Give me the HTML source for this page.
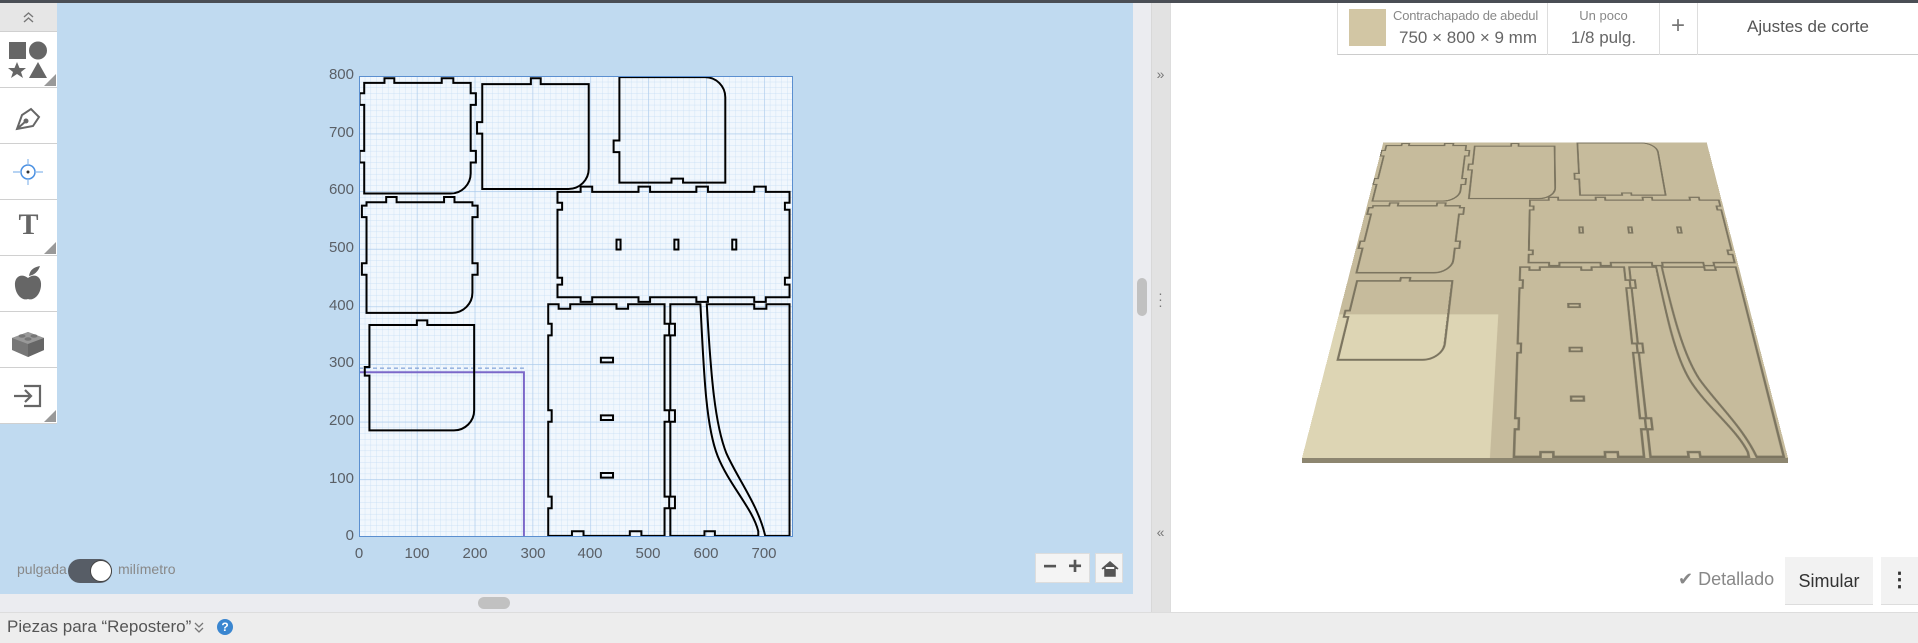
<!DOCTYPE html>
<html><head><meta charset="utf-8"><style>
*{margin:0;padding:0;box-sizing:border-box}
body{width:1918px;height:643px;overflow:hidden;background:#fff;font-family:"Liberation Sans",sans-serif;position:relative}
.abs{position:absolute}
#topline{left:0;top:0;width:1918px;height:3px;background:#4a4e55}
#blue{left:0;top:3px;width:1133px;height:591px;background:#c0daf0}
#tb{left:0;top:3px;width:57px;height:420px;background:#fff;border-right:1px solid #c8c8c8}
.cell{position:absolute;left:0;width:57px;height:56px;border-bottom:1px solid #d0d0d0;background:#fff}
.tri{position:absolute;right:1px;bottom:1px;width:0;height:0;border-left:12px solid transparent;border-bottom:12px solid #999}
.ylab{position:absolute;width:36px;text-align:right;font-size:15px;color:#5a5f66}
.xlab{position:absolute;width:40px;text-align:center;font-size:15px;color:#5a5f66}
</style></head><body>
<div class="abs" id="blue"></div>
<div class="abs" id="topline"></div>
<!-- toolbar -->
<div class="abs" id="tb">
 <div class="cell" style="top:0;height:29px;background:#e6e6e6"><svg width="57" height="29"><path d="M24 14 L28.5 10 L33 14 M24 19 L28.5 15 L33 19" fill="none" stroke="#777" stroke-width="1.4"/></svg></div>
 <div class="cell" style="top:29px">
  <svg width="57" height="56"><rect x="9" y="10" width="17" height="17" fill="#666"/><circle cx="38" cy="18.5" r="9" fill="#666"/><polygon points="17,30 19.5,36 26,36 21,40 23,46 17,42 11,46 13,40 8,36 14.5,36" fill="#666"/><polygon points="38,30 47,46 29,46" fill="#666"/></svg><div class="tri"></div></div>
 <div class="cell" style="top:85px">
  <svg width="57" height="56"><path d="M17 41 L22 27 L31 21 L39 29 L33 38 Z M17 41 L26 33" fill="none" stroke="#666" stroke-width="2"/><circle cx="26" cy="33" r="2.5" fill="#666"/></svg></div>
 <div class="cell" style="top:141px">
  <svg width="57" height="56"><circle cx="28" cy="28" r="7" fill="none" stroke="#4a90e2" stroke-width="1.5"/><circle cx="28" cy="28" r="1.5" fill="#333"/><path d="M28 15V21M28 35V41M13 28H21M35 28H43" stroke="#8bb9ec" stroke-width="1.2"/></svg></div>
 <div class="cell" style="top:197px">
  <div style="position:absolute;left:0;top:8px;width:57px;text-align:center;font-family:'Liberation Serif',serif;font-weight:bold;font-size:30px;color:#666">T</div><div class="tri"></div></div>
 <div class="cell" style="top:253px">
  <svg width="57" height="56"><path d="M28 22 C22 17 14 20 15 30 C16 40 23 45 28 43 C33 45 40 40 41 30 C42 20 34 17 28 22Z" fill="#666"/><path d="M29 20 C30 13 35 11 40 10 C38 16 34 19 29 20Z" fill="#666"/></svg></div>
 <div class="cell" style="top:309px">
  <svg width="57" height="56"><polygon points="12,26 28,20 44,26 44,38 28,45 12,38" fill="#777"/><polygon points="12,26 28,32 44,26 28,20" fill="#999"/><polygon points="28,32 44,26 44,38 28,45" fill="#666"/><ellipse cx="22" cy="24" rx="3.5" ry="1.8" fill="#777"/><ellipse cx="34" cy="24" rx="3.5" ry="1.8" fill="#777"/><ellipse cx="28" cy="27" rx="3.5" ry="1.8" fill="#777"/></svg></div>
 <div class="cell" style="top:365px">
  <svg width="57" height="56"><path d="M24 18 H40 V38 H24" fill="none" stroke="#666" stroke-width="2.2"/><path d="M14 28 H31 M25 22 L31 28 L25 34" fill="none" stroke="#666" stroke-width="2.2"/></svg><div class="tri"></div></div>
</div>
<!-- canvas -->
<svg class="abs" style="left:359px;top:76px" width="434" height="461" viewBox="0 0 750 800" preserveAspectRatio="none">
 <defs>
  <pattern id="mi" width="10" height="10" patternUnits="userSpaceOnUse"><path d="M0 0H10M0 0V10" stroke="#c4dcf3" stroke-width="1.2" fill="none"/></pattern>
  <pattern id="ma" width="100" height="100" patternUnits="userSpaceOnUse" y="0"><path d="M0 0H100M0 0V100" stroke="#a8c8ea" stroke-width="2" fill="none"/></pattern>
 </defs>
 <rect width="750" height="800" fill="#f1f7fd"/>
 <rect width="750" height="800" fill="url(#mi)"/>
 <rect width="750" height="800" fill="url(#ma)"/>
 <path d="M0 514 H285 V800" fill="none" stroke="#7b68c9" stroke-width="2" vector-effect="non-scaling-stroke"/>
 <path d="M0 507 H285" fill="none" stroke="#6a8fd0" stroke-width="1" stroke-dasharray="4 3" vector-effect="non-scaling-stroke"/>
 <g fill="none" stroke="#000" stroke-width="2" vector-effect="non-scaling-stroke">
  <path vector-effect="non-scaling-stroke" d="M9,204 H158 A35,35 0 0 0 193,169 V150 H202 V130 H193 V50 H202 V30 H193 V12 H163 V4 H143 V12 H61 V4 H44 V12 H9 V30 H1 V50 H9 V130 H1 V150 H9 Z"/>
  <path vector-effect="non-scaling-stroke" d="M213,196 H362 A35,35 0 0 0 397,161 V14 H314 V4 H297 V14 H213 V80 H204 V100 H213 Z"/>
  <path vector-effect="non-scaling-stroke" d="M450,2 H598 A35,35 0 0 1 633,37 V185 H560 V178 H540 V185 H450 V132 H440 V112 H450 Z"/>
  <path vector-effect="non-scaling-stroke" d="M343,201 H383 V192 H403 V201 H483 V192 H503 V201 H583 V192 H603 V201 H683 V192 H703 V201 H744 V220 H736 V232 H744 V350 H736 V362 H744 V384 H703 V392 H683 V384 H603 V392 H583 V384 H503 V392 H483 V384 H403 V392 H383 V384 H343 V362 H351 V350 H343 V232 H351 V220 H343 Z"/>
  <rect vector-effect="non-scaling-stroke" x="445" y="284" width="7" height="17"/><rect vector-effect="non-scaling-stroke" x="545" y="284" width="7" height="17"/><rect vector-effect="non-scaling-stroke" x="645" y="284" width="7" height="17"/>
  <path vector-effect="non-scaling-stroke" d="M13,411 H161 A35,35 0 0 0 196,376 V345 H205 V325 H196 V245 H205 V225 H196 V219 H165 V210 H147 V219 H65 V210 H47 V219 H13 V225 H5 V245 H13 V325 H5 V345 H13 Z"/>
  <path vector-effect="non-scaling-stroke" d="M18,615 H164 A35,35 0 0 0 199,580 V432 H118 V424 H100 V432 H18 V505 H10 V520 H18 Z"/>
  <path vector-effect="non-scaling-stroke" d="M327,396 H345 V404 H365 V396 H445 V404 H465 V396 H528 V430 H536 V450 H528 V580 H536 V600 H528 V730 H536 V750 H528 V798 H488 V790 H468 V798 H388 V790 H368 V798 H327 V750 H333 V730 H327 V600 H333 V580 H327 V450 H333 V430 H327 Z"/>
  <rect vector-effect="non-scaling-stroke" x="418" y="489" width="21" height="8"/><rect vector-effect="non-scaling-stroke" x="418" y="589" width="21" height="8"/><rect vector-effect="non-scaling-stroke" x="418" y="689" width="21" height="8"/>
  <path vector-effect="non-scaling-stroke" d="M538,396 H590 C596,520 600,610 620,660 C640,710 680,750 690,790 V798 H615 V790 H597 V798 H538 V750 H546 V730 H538 V600 H546 V580 H538 V450 H546 V430 H538 Z"/>
  <path vector-effect="non-scaling-stroke" d="M601,396 H683 V404 H704 V396 H744 V798 H702 C690,745 655,700 635,655 C615,605 608,520 601,396 Z"/>
 </g>
 <rect x="0" y="0" width="750" height="800" fill="none" stroke="#5b8fd0" stroke-width="2" vector-effect="non-scaling-stroke"/>
</svg>
<div class="ylab" style="left:318px;top:66px">800</div>
<div class="ylab" style="left:318px;top:124px">700</div>
<div class="ylab" style="left:318px;top:181px">600</div>
<div class="ylab" style="left:318px;top:239px">500</div>
<div class="ylab" style="left:318px;top:297px">400</div>
<div class="ylab" style="left:318px;top:354px">300</div>
<div class="ylab" style="left:318px;top:412px">200</div>
<div class="ylab" style="left:318px;top:470px">100</div>
<div class="ylab" style="left:318px;top:527px">0</div>
<div class="xlab" style="left:339px;top:545px">0</div>
<div class="xlab" style="left:397px;top:545px">100</div>
<div class="xlab" style="left:455px;top:545px">200</div>
<div class="xlab" style="left:513px;top:545px">300</div>
<div class="xlab" style="left:570px;top:545px">400</div>
<div class="xlab" style="left:628px;top:545px">500</div>
<div class="xlab" style="left:686px;top:545px">600</div>
<div class="xlab" style="left:744px;top:545px">700</div>
<!-- toggle -->
<div class="abs" style="left:17px;top:561px;font-size:14px;color:#888">pulgada</div>
<div class="abs" style="left:68px;top:559px;width:44px;height:24px;border-radius:12px;background:#575d66"></div>
<div class="abs" style="left:90px;top:560px;width:22px;height:22px;border-radius:11px;background:#fff;border:1px solid #444"></div>
<div class="abs" style="left:118px;top:561px;font-size:14px;color:#888">milímetro</div>
<!-- zoom controls -->
<div class="abs" style="left:1035px;top:553px;width:55px;height:30px;background:#f4f4f4;border:1px solid #ddd;font-size:24px;color:#555;line-height:26px;font-weight:bold"><span style="position:absolute;left:7px">−</span><span style="position:absolute;left:32px">+</span></div>
<div class="abs" style="left:1095px;top:553px;width:28px;height:30px;background:#f4f4f4;border:1px solid #ddd"><svg width="28" height="30"><path d="M6 15 L14 8 L22 15 M9 13 V22 H19 V13" fill="#555" stroke="#555" stroke-width="1.5"/></svg></div>
<!-- bottom scroll strip -->
<div class="abs" style="left:0;top:594px;width:1133px;height:18px;background:#ebecf0"></div>
<div class="abs" style="left:478px;top:597px;width:32px;height:12px;border-radius:6px;background:#c1c1c1"></div>
<!-- middle strip -->
<div class="abs" style="left:1133px;top:3px;width:18px;height:609px;background:#ebecf0"></div>
<div class="abs" style="left:1137px;top:278px;width:10px;height:38px;border-radius:5px;background:#c1c1c1"></div>
<div class="abs" style="left:1151px;top:3px;width:19px;height:609px;background:#e2e2e2;border-left:1px solid #d8d8d8"></div>
<div class="abs" style="left:1151px;top:66px;width:19px;text-align:center;font-size:14px;color:#777">»</div>
<div class="abs" style="left:1151px;top:290px;width:19px;text-align:center;font-size:14px;color:#777;line-height:6px">·<br>·<br>·</div>
<div class="abs" style="left:1151px;top:524px;width:19px;text-align:center;font-size:14px;color:#777">«</div>
<div class="abs" style="left:1170px;top:3px;width:1px;height:609px;background:#ddd"></div>
<!-- header right -->
<div class="abs" style="left:1337px;top:3px;width:581px;height:52px;border-bottom:1px solid #ccc;border-left:1px solid #ddd;background:#fff"></div>
<div class="abs" style="left:1349px;top:9px;width:37px;height:37px;background:#d2c6a4"></div>
<div class="abs" style="left:1393px;top:8px;font-size:13px;color:#888;letter-spacing:-0.2px">Contrachapado de abedul</div>
<div class="abs" style="left:1399px;top:28px;font-size:17px;color:#666">750 × 800 × 9 mm</div>
<div class="abs" style="left:1547px;top:3px;width:1px;height:52px;background:#ddd"></div>
<div class="abs" style="left:1547px;top:8px;width:113px;text-align:center;font-size:13px;color:#888">Un poco</div>
<div class="abs" style="left:1547px;top:28px;width:113px;text-align:center;font-size:17px;color:#666">1/8 pulg.</div>
<div class="abs" style="left:1659px;top:3px;width:1px;height:52px;background:#ddd"></div>
<div class="abs" style="left:1659px;top:12px;width:38px;text-align:center;font-size:24px;color:#777">+</div>
<div class="abs" style="left:1697px;top:3px;width:1px;height:52px;background:#ddd"></div>
<div class="abs" style="left:1698px;top:17px;width:220px;text-align:center;font-size:17px;color:#555">Ajustes de corte</div>
<!-- 3D board -->
<div class="abs" style="left:1302px;top:458px;width:486px;height:5px;background:#8d8670"></div>
<div class="abs" style="left:1302px;top:-65px;width:486px;height:523px;perspective:440px;perspective-origin:243px 523px">
 <div style="width:486px;height:523px;transform-origin:50% 100%;transform:rotateX(25deg);background:#c6bb9c">
  <svg width="486" height="523" viewBox="0 0 750 800" preserveAspectRatio="none">
   <rect x="0" y="514" width="290" height="286" fill="#ddd5b4"/>
   <g fill="none" stroke="#7c7560" stroke-width="4">
    <path d="M9,204 H158 A35,35 0 0 0 193,169 V150 H202 V130 H193 V50 H202 V30 H193 V12 H163 V4 H143 V12 H61 V4 H44 V12 H9 V30 H1 V50 H9 V130 H1 V150 H9 Z"/>
    <path d="M213,196 H362 A35,35 0 0 0 397,161 V14 H314 V4 H297 V14 H213 V80 H204 V100 H213 Z"/>
    <path d="M450,2 H598 A35,35 0 0 1 633,37 V185 H560 V178 H540 V185 H450 V132 H440 V112 H450 Z"/>
    <path d="M343,201 H383 V192 H403 V201 H483 V192 H503 V201 H583 V192 H603 V201 H683 V192 H703 V201 H744 V220 H736 V232 H744 V350 H736 V362 H744 V384 H703 V392 H683 V384 H603 V392 H583 V384 H503 V392 H483 V384 H403 V392 H383 V384 H343 V362 H351 V350 H343 V232 H351 V220 H343 Z"/>
    <rect x="445" y="284" width="7" height="17"/><rect x="545" y="284" width="7" height="17"/><rect x="645" y="284" width="7" height="17"/>
    <path d="M13,411 H161 A35,35 0 0 0 196,376 V345 H205 V325 H196 V245 H205 V225 H196 V219 H165 V210 H147 V219 H65 V210 H47 V219 H13 V225 H5 V245 H13 V325 H5 V345 H13 Z"/>
    <path d="M18,615 H164 A35,35 0 0 0 199,580 V432 H118 V424 H100 V432 H18 V505 H10 V520 H18 Z"/>
    <path d="M327,396 H345 V404 H365 V396 H445 V404 H465 V396 H528 V430 H536 V450 H528 V580 H536 V600 H528 V730 H536 V750 H528 V798 H488 V790 H468 V798 H388 V790 H368 V798 H327 V750 H333 V730 H327 V600 H333 V580 H327 V450 H333 V430 H327 Z"/>
    <rect x="418" y="489" width="21" height="8"/><rect x="418" y="589" width="21" height="8"/><rect x="418" y="689" width="21" height="8"/>
    <path d="M538,396 H590 C596,520 600,610 620,660 C640,710 680,750 690,790 V798 H615 V790 H597 V798 H538 V750 H546 V730 H538 V600 H546 V580 H538 V450 H546 V430 H538 Z"/>
    <path d="M601,396 H683 V404 H704 V396 H744 V798 H702 C690,745 655,700 635,655 C615,605 608,520 601,396 Z"/>
   </g>
  </svg>
 </div>
</div>
<!-- bottom right controls -->
<div class="abs" style="left:1678px;top:569px;font-size:18px;color:#888">✔ Detallado</div>
<div class="abs" style="left:1785px;top:557px;width:88px;height:48px;background:#f2f2f2;border-bottom:1px solid #ddd;text-align:center;line-height:48px;font-size:18px;color:#333">Simular</div>
<div class="abs" style="left:1881px;top:557px;width:37px;height:48px;background:#f2f2f2;border-bottom:1px solid #ddd;text-align:center;line-height:46px;font-size:20px;font-weight:bold;color:#333">⋮</div>
<!-- bottom bar -->
<div class="abs" style="left:0;top:612px;width:1918px;height:31px;background:#ededed;border-top:1px solid #ddd"></div>
<div class="abs" style="left:7px;top:617px;font-size:17px;color:#555">Piezas para “Repostero”</div>
<svg class="abs" style="left:193px;top:620px" width="12" height="14"><path d="M2 3 L6 7 L10 3 M2 8 L6 12 L10 8" fill="none" stroke="#777" stroke-width="1.3"/></svg>
<div class="abs" style="left:217px;top:619px;width:16px;height:16px;border-radius:8px;background:#3a86d0;color:#fff;font-size:12px;font-weight:bold;text-align:center;line-height:16px">?</div>
</body></html>
